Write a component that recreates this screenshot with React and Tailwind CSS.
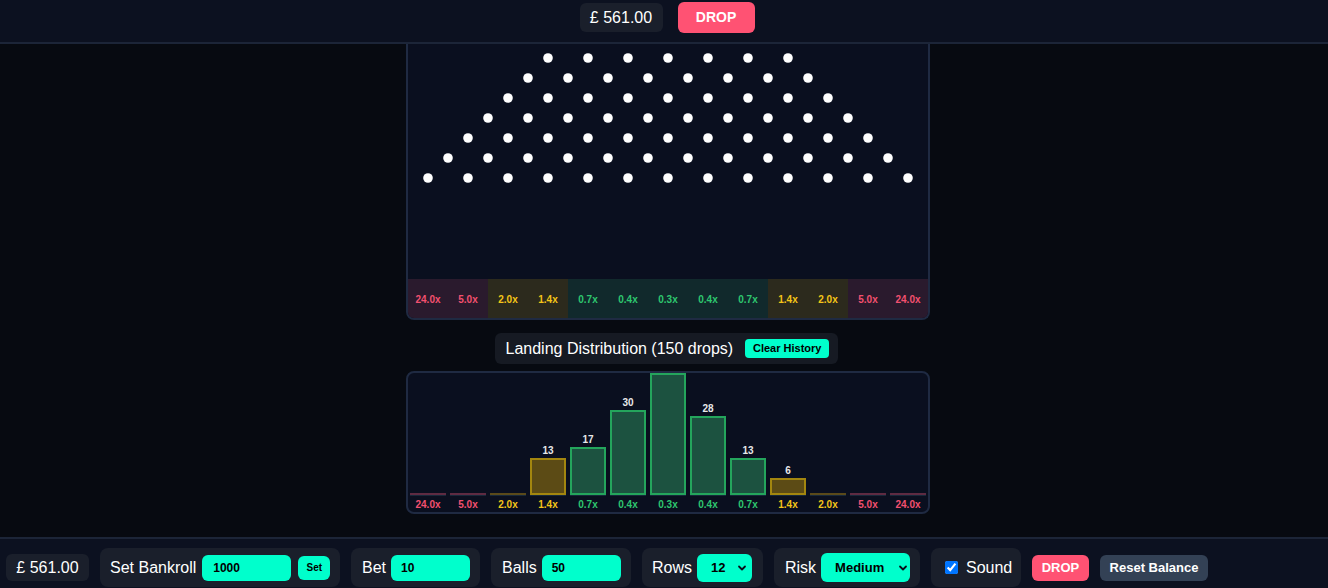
import React from "react";

const MULTS = ["24.0x","5.0x","2.0x","1.4x","0.7x","0.4x","0.3x","0.4x","0.7x","1.4x","2.0x","5.0x","24.0x"];
const COUNTS = [0,0,0,13,17,30,43,28,13,6,0,0,0];
const kind = (i) => (i <= 1 || i >= 11 ? "red" : i <= 3 || i >= 9 ? "yel" : "grn");

const TEXT = { red: "text-[#f2506f]", yel: "text-[#f5c518]", grn: "text-[#2ec66f]" };
const BUCKET_BG = { red: "bg-[#2a1a2d]", yel: "bg-[#2c2a1d]", grn: "bg-[#11292c]" };
const BAR = {
  red: "bg-[#3a1f2e] border-[#6a2f48]",
  yel: "bg-[#5c4b15] border-[#a3860f]",
  grn: "bg-[#1c5240] border-[#24a55c]",
};
const ZERO = { red: "bg-[#5e2b42]", yel: "bg-[#5a4a1a]", grn: "bg-[#1f4a3a]" };

function Pegs() {
  const rows = [];
  for (let r = 0; r < 7; r++) {
    const n = 7 + r;
    const startX = 260 - ((n - 1) * 40) / 2;
    for (let k = 0; k < n; k++) {
      rows.push(<circle key={r + "-" + k} cx={startX + k * 40} cy={14 + r * 20} r={4.8} fill="#ffffff" />);
    }
  }
  return (
    <svg width="520" height="235" viewBox="0 0 520 235" className="block shrink-0">
      {rows}
    </svg>
  );
}

function Chevron() {
  return (
    <svg width="10" height="10" viewBox="0 0 10 10" className="block">
      <path d="M2 3.5 L5 6.5 L8 3.5" stroke="#0a0f1a" strokeWidth="1.8" fill="none" strokeLinecap="round" strokeLinejoin="round" />
    </svg>
  );
}

const MAXH = 122;

export default function App() {
  const max = Math.max(...COUNTS);
  return (
    <div className="w-[1328px] h-[588px] overflow-hidden flex flex-col bg-[#070a11] text-white" style={{ fontFamily: '"Liberation Sans", Arial, sans-serif' }}>
      {/* header */}
      <div className="h-[44px] shrink-0 bg-[#0c1120] border-b-2 border-[#1c2538] flex items-start justify-center pt-[2px] pl-[6px] gap-[15px]">
        <div className="mt-[1px] h-[29px] w-[83px] rounded-md bg-[#1a1f2b] flex items-center justify-center text-[16px]">£ 561.00</div>
        <div className="h-[31px] w-[77px] rounded-md bg-[#ff5273] flex items-center justify-center text-[14px] font-bold">DROP</div>
      </div>

      {/* main */}
      <div className="flex-1 flex flex-col items-center">
        <div className="w-[524px] ml-[8px] flex flex-col items-center">
          {/* board */}
          <div className="w-[524px] h-[276px] bg-[#0a0f1f] border-2 border-t-0 border-[#1f2a42] rounded-b-lg overflow-hidden flex flex-col">
            <Pegs />
            <div className="h-[40px] shrink-0 flex">
              {MULTS.map((m, i) => (
                <div key={i} className={"w-[40px] flex items-center justify-center text-[10px] font-bold " + BUCKET_BG[kind(i)] + " " + TEXT[kind(i)]}>
                  {m}
                </div>
              ))}
            </div>
          </div>

          {/* title pill */}
          <div className="mt-[13px] h-[31px] w-[343px] mr-[4px] rounded-md bg-[#161a23] flex items-center pl-[11px] gap-[12px]">
            <span className="text-[16px]">Landing Distribution (150 drops)</span>
            <span className="h-[19px] w-[84px] rounded bg-[#00ffcc] text-black text-[11px] font-bold flex items-center justify-center">Clear History</span>
          </div>

          {/* histogram */}
          <div className="mt-[7px] w-[524px] h-[143px] bg-[#0a0f1f] border-2 border-[#1f2a42] rounded-lg overflow-hidden flex">
            {COUNTS.map((c, i) => {
              const k = kind(i);
              const h = Math.round((c / max) * MAXH);
              return (
                <div key={i} className="w-[40px] flex flex-col items-center">
                  <div className="h-[122px] shrink-0 w-full flex flex-col items-center justify-end">
                    {c > 0 ? (
                      <>
                        {h + 13 <= MAXH && (
                          <span className="shrink-0 text-[10px] font-bold text-[#e8e8ea] leading-[12px] mb-[1px]">{c}</span>
                        )}
                        <div className={"shrink-0 w-[36px] border-2 " + BAR[k]} style={{ height: h + "px" }} />
                      </>
                    ) : (
                      <div className={"shrink-0 w-[36px] h-[2px] " + ZERO[k]} />
                    )}
                  </div>
                  <div className="w-[36px] h-[1px] shrink-0 bg-[#17283a]" />
                  <div className={"mt-[3px] text-[10px] font-bold leading-[12px] " + TEXT[k]}>{MULTS[i]}</div>
                </div>
              );
            })}
          </div>
        </div>
      </div>

      {/* footer */}
      <div className="h-[51px] shrink-0 bg-[#0c1120] border-t-2 border-[#1c2538] pt-[9px] pl-[6px] flex items-start gap-[11px]">
        <div className="h-[39px] flex items-center">
          <div className="h-[27px] w-[83px] rounded-md bg-[#1a1f2b] flex items-center justify-center text-[16px]">£ 561.00</div>
        </div>

        <div className="h-[39px] w-[240px] rounded-lg bg-[#1a1f2b] flex items-center pl-[10px]">
          <span className="text-[16px]">Set Bankroll</span>
          <div className="ml-[6px] h-[26px] w-[89px] rounded-md bg-[#00ffcc] text-black text-[12px] font-semibold flex items-center pl-[11px]">1000</div>
          <div className="ml-[7px] h-[24px] w-[32px] rounded-md bg-[#00ffcc] text-black text-[10px] font-bold flex items-center justify-center">Set</div>
        </div>

        <div className="h-[39px] w-[129px] rounded-lg bg-[#1a1f2b] flex items-center pl-[11px]">
          <span className="text-[16px]">Bet</span>
          <div className="ml-[5px] h-[26px] w-[79px] rounded-md bg-[#00ffcc] text-black text-[12px] font-semibold flex items-center pl-[10px]">10</div>
        </div>

        <div className="h-[39px] w-[140px] rounded-lg bg-[#1a1f2b] flex items-center pl-[11px]">
          <span className="text-[16px]">Balls</span>
          <div className="ml-[5px] h-[26px] w-[79px] rounded-md bg-[#00ffcc] text-black text-[12px] font-semibold flex items-center pl-[10px]">50</div>
        </div>

        <div className="h-[39px] w-[121px] rounded-lg bg-[#1a1f2b] flex items-center pl-[10px]">
          <span className="text-[16px]">Rows</span>
          <div className="ml-[5px] h-[28px] w-[55px] rounded-md bg-[#00ffcc] text-black text-[13px] font-semibold flex items-center pl-[14px] pr-[5px] justify-between">
            <span>12</span>
            <Chevron />
          </div>
        </div>

        <div className="h-[39px] w-[146px] rounded-lg bg-[#1a1f2b] flex items-center pl-[11px]">
          <span className="text-[16px]">Risk</span>
          <div className="ml-[5px] h-[29px] w-[89px] rounded-md bg-[#00ffcc] text-black text-[13px] font-bold flex items-center pl-[14px] pr-[2px] justify-between">
            <span>Medium</span>
            <Chevron />
          </div>
        </div>

        <div className="h-[39px] w-[90px] rounded-lg bg-[#1a1f2b] flex items-center pl-[14px]">
          <input type="checkbox" defaultChecked className="w-[13px] h-[13px] m-0" />
          <span className="ml-[8px] text-[16px]">Sound</span>
        </div>

        <div className="h-[39px] flex items-center">
          <div className="h-[26px] w-[57px] rounded-md bg-[#ff5273] text-[13px] font-bold flex items-center justify-center">DROP</div>
        </div>
        <div className="h-[39px] flex items-center">
          <div className="h-[26px] w-[108px] rounded-md bg-[#334155] text-[13px] font-bold flex items-center justify-center">Reset Balance</div>
        </div>
      </div>
    </div>
  );
}
